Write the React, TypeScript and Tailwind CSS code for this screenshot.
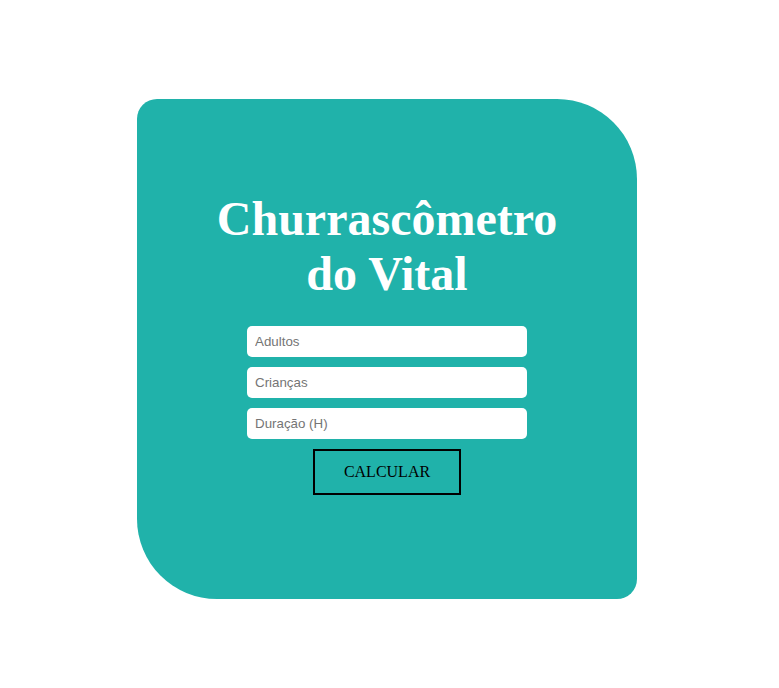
import React from 'react';

const fields = ['Adultos', 'Crianças', 'Duração (H)'];

const App = () => {
  return (
    <div className="min-h-screen w-full bg-white pt-[99px]">
      <div className="ml-[137px] flex h-[500px] w-[500px] flex-col items-center rounded-tl-[20px] rounded-tr-[80px] rounded-br-[20px] rounded-bl-[80px] bg-[#20b2aa] pt-[92px]">
        <h1 className="w-[360px] text-center font-['Liberation_Serif',serif] text-[48px] font-bold leading-[55px] text-white">
          Churrascômetro do Vital
        </h1>

        <div className="mt-[25px] flex flex-col gap-[10px]">
          {fields.map((label) => (
            <input
              key={label}
              type="text"
              placeholder={label}
              className="h-[31px] w-[280px] rounded-[5px] bg-white px-[8px] font-['Liberation_Sans',Arial,sans-serif] text-[13.33px] text-black outline-none placeholder:text-[#757575]"
            />
          ))}
        </div>

        <button className="mt-[10px] h-[46px] w-[148px] border-2 border-black bg-transparent font-['Liberation_Serif',serif] text-[16px] text-black">
          CALCULAR
        </button>
      </div>
    </div>
  );
};

export default App;
